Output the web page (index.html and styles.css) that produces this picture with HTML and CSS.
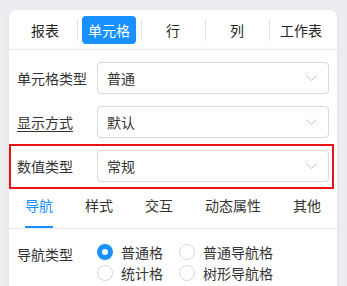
FILE: index.html
```html
<!DOCTYPE html>
<html lang="zh-CN">
<head>
    <meta charset="UTF-8">
    <meta name="viewport" content="width=device-width, initial-scale=1.0">
    <title>单元格属性</title>
    <link rel="stylesheet" href="styles.css">
</head>
<body>
    <div class="panel">
        <div class="seg-tabs">
            <span class="seg">报表</span>
            <span class="seg"><span class="seg-btn">单元格</span></span>
            <span class="seg">行</span>
            <span class="seg">列</span>
            <span class="seg">工作表</span>
        </div>

        <div class="form">
            <div class="form-row">
                <span class="form-label">单元格类型</span>
                <div class="select">
                    <span>普通</span>
                    <svg class="arrow" width="11" height="6" viewBox="0 0 11 6"><path d="M0.5 0.5 L5.5 5.5 L10.5 0.5" fill="none" stroke="#c4c4c4" stroke-width="1"/></svg>
                </div>
            </div>
            <div class="form-row">
                <span class="form-label underline">显示方式</span>
                <div class="select">
                    <span>默认</span>
                    <svg class="arrow" width="11" height="6" viewBox="0 0 11 6"><path d="M0.5 0.5 L5.5 5.5 L10.5 0.5" fill="none" stroke="#c4c4c4" stroke-width="1"/></svg>
                </div>
            </div>
            <div class="form-row highlight">
                <span class="form-label">数值类型</span>
                <div class="select">
                    <span>常规</span>
                    <svg class="arrow" width="11" height="6" viewBox="0 0 11 6"><path d="M0.5 0.5 L5.5 5.5 L10.5 0.5" fill="none" stroke="#c4c4c4" stroke-width="1"/></svg>
                </div>
            </div>
        </div>

        <div class="tabs">
            <span class="tab active">导航</span>
            <span class="tab">样式</span>
            <span class="tab">交互</span>
            <span class="tab">动态属性</span>
            <span class="tab">其他</span>
        </div>

        <div class="pane">
            <div class="pane-row">
                <span class="form-label pane-label">导航类型</span>
                <div class="radio-group">
                    <label class="radio"><span class="radio-dot checked"></span><span class="radio-text">普通格</span></label>
                    <label class="radio"><span class="radio-dot"></span><span class="radio-text">普通导航格</span></label>
                    <label class="radio"><span class="radio-dot"></span><span class="radio-text">统计格</span></label>
                    <label class="radio"><span class="radio-dot"></span><span class="radio-text">树形导航格</span></label>
                </div>
            </div>
        </div>
    </div>
</body>
</html>
```

FILE: styles.css
```css
html, body {
    height: 100%;
}
body {
    margin: 0;
    padding: 10px 10px 0 9px;
    box-sizing: border-box;
    background-color: #ebedf0;
    font-family: "Noto Sans CJK SC", "Noto Sans", sans-serif;
    font-size: 14px;
    color: #333;
    overflow: hidden;
}
.panel {
    background-color: white;
    border-radius: 8px 8px 0 0;
    box-shadow: 0 1px 4px rgba(0,0,0,0.05);
    height: 100%;
    overflow: hidden;
}
.seg-tabs {
    display: flex;
    padding: 6px 4px 5px;
    border-bottom: 1px solid #e8e8e8;
}
.seg {
    flex: 1;
    height: 28px;
    line-height: 28px;
    display: flex;
    justify-content: center;
    align-items: center;
    color: #262626;
}
.seg + .seg {
    background: linear-gradient(#e3e3e3, #e3e3e3) left center / 1px 22px no-repeat;
}
.seg-btn {
    background-color: #1890ff;
    color: white;
    border-radius: 4px;
    padding: 0 6px;
    height: 28px;
    line-height: 28px;
}
.form {
    padding: 12px 8px 0;
}
.form-row {
    display: flex;
    align-items: center;
    height: 32px;
    margin-bottom: 12px;
}
.form-label {
    width: 80px;
    flex-shrink: 0;
    line-height: 21px;
}
.underline {
    text-decoration: underline;
    text-underline-offset: 3px;
}
.select {
    flex: 1;
    height: 32px;
    box-sizing: border-box;
    border: 1px solid #d9d9d9;
    border-radius: 4px;
    padding: 0 11px 0 9px;
    display: flex;
    align-items: center;
    justify-content: space-between;
}
.arrow {
    display: block;
}
.highlight {
    position: relative;
}
.highlight::after {
    content: "";
    position: absolute;
    top: -6px;
    left: -8px;
    right: -5px;
    bottom: -7px;
    border: 2px solid #e61414;
}
.tabs {
    display: flex;
    gap: 32px;
    padding: 0 16px;
    border-bottom: 1px solid #ebebeb;
}
.tab {
    position: relative;
    line-height: 22px;
    padding-bottom: 12px;
}
.tab.active {
    color: #1890ff;
}
.tab.active::after {
    content: "";
    position: absolute;
    left: 0;
    right: 0;
    bottom: 0;
    height: 2px;
    background-color: #1890ff;
}
.pane {
    padding: 12px 8px;
}
.pane-row {
    display: flex;
    align-items: flex-start;
}
.pane-label {
    padding-top: 3px;
}
.radio-group {
    display: grid;
    grid-template-columns: auto auto;
    justify-content: start;
}
.radio {
    display: flex;
    align-items: center;
    height: 21px;
    margin-right: 8px;
}
.radio-dot {
    width: 16px;
    height: 16px;
    box-sizing: border-box;
    border: 1px solid #d9d9d9;
    border-radius: 50%;
    background-color: white;
}
.radio-dot.checked {
    border: 5px solid #1890ff;
}
.radio-text {
    padding: 0 8px;
}
```
